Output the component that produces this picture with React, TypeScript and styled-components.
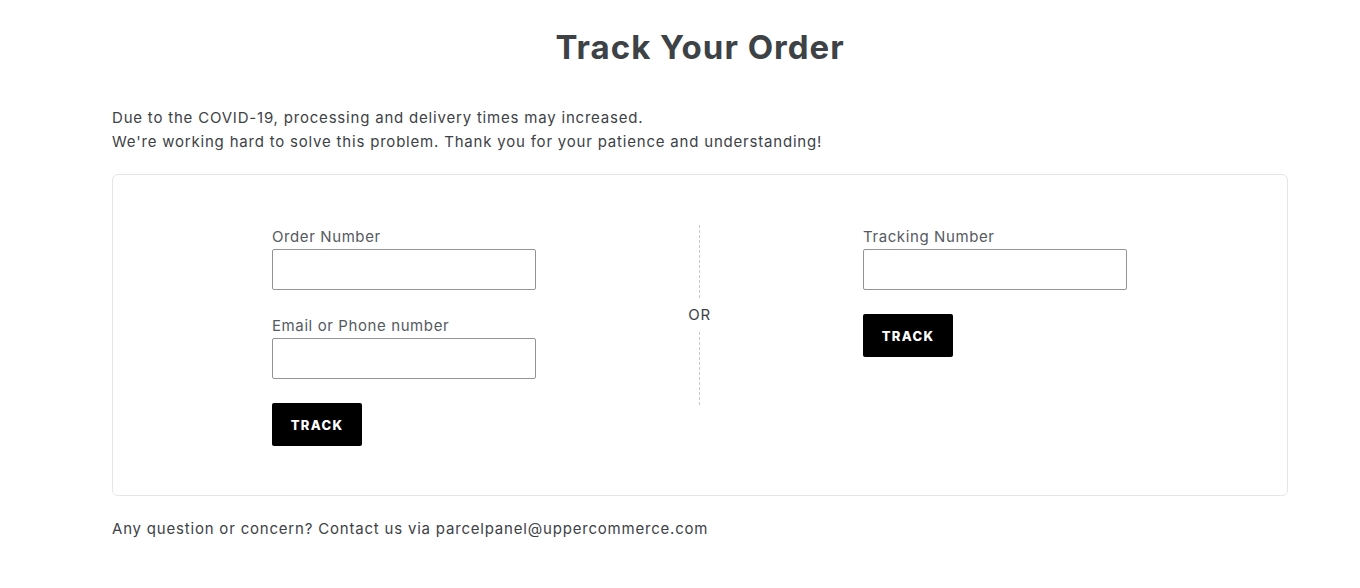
import React from "react";
import styled, { createGlobalStyle } from "styled-components";

const Global = createGlobalStyle`
  html, body { margin: 0; padding: 0; background: #fff; }
  body { font-family: Inter, "Open Sans", sans-serif; color: #3d4246; }
  * { box-sizing: border-box; }
`;

const Page = styled.div`
  width: 1176px;
  margin-left: 112px;
  padding-top: 25px;
`;

const Title = styled.h1`
  margin: 0;
  text-align: center;
  font-size: 33px;
  line-height: 44px;
  font-weight: 700;
  letter-spacing: 1px;
  color: #3d4246;
`;

const Text = styled.div`
  font-size: 15px;
  line-height: 24px;
  letter-spacing: 0.8px;
  color: #3d4246;
`;

const Notice = styled(Text)`
  margin-top: 37px;
`;

const Card = styled.div`
  margin-top: 20px;
  border: 1px solid #e5e5e5;
  border-radius: 6px;
  padding: 50px 160px 49px 159px;
  display: flex;
  justify-content: space-between;
  align-items: flex-start;
`;

const Column = styled.div`
  width: 264px;
  padding-top: 2px;
  display: flex;
  flex-direction: column;
`;

const Field = styled.div`
  display: flex;
  flex-direction: column;
  margin-bottom: 24px;
  & + & { margin-top: 2px; }
`;

const Label = styled.label`
  font-size: 15px;
  line-height: 20px;
  letter-spacing: 0.6px;
  color: #555a5f;
  margin-bottom: 2px;
`;

const Input = styled.input`
  width: 264px;
  height: 41px;
  border: 1px solid #949494;
  border-radius: 2px;
  padding: 0 12px;
  font: inherit;
  outline: none;
`;

const Button = styled.button`
  width: 90px;
  height: 43px;
  background: #000;
  color: #fff;
  border: none;
  border-radius: 2px;
  font-family: Inter, sans-serif;
  font-weight: 800;
  font-size: 13px;
  letter-spacing: 1.3px;
  cursor: pointer;
`;

const Divider = styled.div`
  width: 40px;
  height: 180px;
  display: flex;
  flex-direction: column;
  align-items: center;
`;

const Dash = styled.div`
  flex: 1;
  width: 0;
  border-left: 1px dashed #c8c8c8;
`;

const Or = styled.div`
  font-size: 15px;
  line-height: 20px;
  letter-spacing: 0.6px;
  color: #3d4246;
  padding: 7px 0;
`;

const Footer = styled(Text)`
  margin-top: 21px;
`;

export default function App() {
  return (
    <>
      <Global />
      <Page>
        <Title>Track Your Order</Title>
        <Notice>
          Due to the COVID-19, processing and delivery times may increased.
          <br />
          We're working hard to solve this problem. Thank you for your patience and understanding!
        </Notice>
        <Card>
          <Column>
            <Field>
              <Label>Order Number</Label>
              <Input />
            </Field>
            <Field>
              <Label>Email or Phone number</Label>
              <Input />
            </Field>
            <Button>TRACK</Button>
          </Column>
          <Divider>
            <Dash />
            <Or>OR</Or>
            <Dash />
          </Divider>
          <Column>
            <Field>
              <Label>Tracking Number</Label>
              <Input />
            </Field>
            <Button>TRACK</Button>
          </Column>
        </Card>
        <Footer>Any question or concern? Contact us via parcelpanel@uppercommerce.com</Footer>
      </Page>
    </>
  );
}
